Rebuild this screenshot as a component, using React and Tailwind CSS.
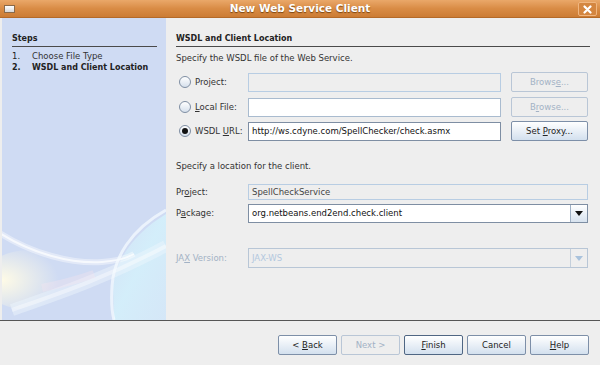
import React from 'react';

const U = ({ children }) => <span className="underline underline-offset-[1px]">{children}</span>;

const Radio = ({ checked }) => (
  <span className="relative inline-flex h-[12px] w-[12px] shrink-0 items-center justify-center rounded-full border border-[#7f8ea3] bg-gradient-to-b from-[#ffffff] to-[#d6e0ec]">
    {checked && <span className="h-[6px] w-[6px] rounded-full bg-[#111]" />}
  </span>
);

const Btn = ({ children, disabled, primary, className = '' }) => (
  <div
    className={`flex h-[20px] items-center justify-center rounded-[2px] border ${
      disabled
        ? 'border-[#b9c6d6] bg-[#eeeeee] text-[#a3b2c5]'
        : primary
        ? 'border-[#4f6683] bg-gradient-to-b from-[#ffffff] to-[#d3e0ee] text-[#222]'
        : 'border-[#7d8fa8] bg-gradient-to-b from-[#ffffff] to-[#d3e0ee] text-[#222]'
    } ${className}`}
  >
    <span className="whitespace-pre">{children}</span>
  </div>
);

const Arrow = ({ disabled }) => (
  <div className="flex h-full w-[17px] items-center justify-center border-l border-[#9fb0c4] bg-gradient-to-b from-[#ffffff] to-[#d7e2ee]">
    <svg width="8" height="5" viewBox="0 0 8 5">
      <path d="M0 0 H8 L4 5 Z" fill={disabled ? '#a9c2dc' : '#111'} />
    </svg>
  </div>
);

// soft light streaks in the bottom of the steps panel
const Swirl = () => (
  <svg className="absolute left-0 top-0 block" width="164" height="302" viewBox="0 0 164 302">
    <defs>
      <radialGradient id="glow" cx="0.2" cy="0.5" r="0.6">
        <stop offset="0" stopColor="#fffbe6" stopOpacity="1" />
        <stop offset="1" stopColor="#fffbe6" stopOpacity="0" />
      </radialGradient>
      <linearGradient id="cyan" x1="0" y1="0" x2="1" y2="1">
        <stop offset="0" stopColor="#d9f2fc" stopOpacity="0.2" />
        <stop offset="0.5" stopColor="#d4f0fb" stopOpacity="0.9" />
        <stop offset="1" stopColor="#d8eefa" stopOpacity="0.6" />
      </linearGradient>
    </defs>
    <ellipse cx="28" cy="262" rx="48" ry="30" fill="url(#glow)" />
    <path d="M164 196 C134 214 114 240 111 268 L112 302 L164 302 Z" fill="url(#cyan)" />
    <path d="M10 292 C50 278 100 262 164 228" stroke="#eef7fd" strokeOpacity="0.45" strokeWidth="12" fill="none" />
    <path d="M10 292 C50 278 100 262 164 228" stroke="#ffffff" strokeOpacity="0.4" strokeWidth="4" fill="none" />
    <path d="M-4 214 C30 236 70 246 100 244 C115 243 125 240 132 236" stroke="#ffffff" strokeOpacity="0.4" strokeWidth="6" fill="none" />
    <path d="M-4 214 C30 236 70 246 100 244 C115 243 125 240 132 236" stroke="#ffffff" strokeOpacity="0.7" strokeWidth="2" fill="none" />
    <path d="M164 192 C128 212 112 240 110 268 C109 285 110 295 112 302" stroke="#f6fcff" strokeOpacity="0.7" strokeWidth="3" fill="none" />
    <path d="M40 270 C60 266 75 262 92 256" stroke="#fbe6ee" strokeOpacity="0.3" strokeWidth="8" fill="none" />
  </svg>
);

export default function App() {
  return (
    <div className="flex h-[365px] w-[600px] flex-col bg-[#eeeeee] font-['DejaVu_Sans',sans-serif] text-[8.5px] leading-[11px] text-[#222]">
      {/* title bar */}
      <div className="relative flex h-[18px] shrink-0 items-center justify-center border-b border-[#b46a28] bg-gradient-to-b from-[#eaa869] via-[#d98c45] to-[#cc7c34]">
        <div className="absolute left-[4px] top-[5px] h-[8px] w-[11px] border border-[#8a6a4a] bg-gradient-to-b from-[#ffffff] to-[#d8d8d8]" />
        <span className="text-[10.5px] font-bold text-white [text-shadow:0_1px_1px_#7a4410]">New Web Service Client</span>
        <div className="absolute right-[3px] top-[2px] flex h-[14px] w-[19px] items-center justify-center rounded-[2px] border border-[#f0b680] bg-[#d48640]">
          <svg width="9" height="9" viewBox="0 0 9 9">
            <path d="M1.5 1.5 L7.5 7.5 M7.5 1.5 L1.5 7.5" stroke="#fff" strokeWidth="2.2" strokeLinecap="round" />
          </svg>
        </div>
      </div>

      {/* main */}
      <div className="flex h-[302px] shrink-0">
        <div className="relative ml-[2px] w-[164px] overflow-hidden bg-[#cfdbf3]">
          <Swirl />
          <div className="relative pl-[10px] pr-[9px]">
            <div className="border-b border-[#4a4a4a] pb-[2px] pt-[15px] text-[8px] font-bold">Steps</div>
            <div className="mt-[3px] leading-[12px]">
              <div className="flex"><span className="w-[20px]">1.</span><span className="text-[#333]">Choose File Type</span></div>
              <div className="flex text-[8px] font-bold"><span className="w-[20px]">2.</span><span>WSDL and Client Location</span></div>
            </div>
          </div>
        </div>

        <div className="flex-1 pl-[10px] pr-[10px]">
          <div className="border-b border-[#4a4a4a] pb-[2px] pt-[15px] text-[8px] font-bold">WSDL and Client Location</div>
          <div className="mt-[6px] text-[#333]">Specify the WSDL file of the Web Service.</div>

          <div className="mt-[8px] flex h-[20px] items-center">
            <div className="flex w-[72px] items-center gap-[4px] pl-[3px] text-[#333]"><Radio /><span>Project:</span></div>
            <div className="h-[19px] w-[253px] border border-[#b8cde3] bg-[#eeeeee]" />
            <Btn disabled className="ml-[10px] w-[77px]">Brows<U>e</U>...</Btn>
          </div>

          <div className="mt-[5px] flex h-[20px] items-center">
            <div className="flex w-[72px] items-center gap-[4px] pl-[3px] text-[#333]"><Radio /><span><U>L</U>ocal File:</span></div>
            <div className="h-[19px] w-[253px] border border-[#a9bbcf] bg-white" />
            <Btn disabled className="ml-[10px] w-[77px]">B<U>r</U>owse...</Btn>
          </div>

          <div className="mt-[4px] flex h-[20px] items-center">
            <div className="flex w-[72px] items-center gap-[4px] pl-[3px] text-[#333]"><Radio checked /><span>WSDL <U>U</U>RL:</span></div>
            <div className="flex h-[19px] w-[253px] items-center border border-[#7e8ea3] bg-white pl-[3px] text-[#111]">http://ws.cdyne.com/SpellChecker/check.asmx</div>
            <Btn className="ml-[10px] w-[77px]">{'Set '}<U>P</U>roxy...</Btn>
          </div>

          <div className="mt-[20px] text-[#333]">Specify a location for the client.</div>

          <div className="mt-[12px] flex h-[16px] items-center">
            <div className="w-[72px] text-[#333]">Pr<U>o</U>ject:</div>
            <div className="flex h-[16px] w-[340px] items-center border border-[#b8cde3] bg-[#eeeeee] pl-[3px] text-[#444]">SpellCheckService</div>
          </div>

          <div className="mt-[4px] flex h-[19px] items-center">
            <div className="w-[72px] text-[#333]">P<U>a</U>ckage:</div>
            <div className="flex h-[19px] w-[340px] items-center border border-[#7e8ea3] bg-white">
              <span className="flex-1 pl-[3px] text-[#111]">org.netbeans.end2end.check.client</span>
              <Arrow />
            </div>
          </div>

          <div className="mt-[25px] flex h-[20px] items-center">
            <div className="w-[72px] text-[#a3b2c5]">JA<U>X</U> Version:</div>
            <div className="flex h-[20px] w-[340px] items-center border border-[#b8c6d6] bg-[#eeeeee]">
              <span className="flex-1 pl-[3px] text-[#b3c8de]">JAX-WS</span>
              <div className="flex h-full w-[17px] items-center justify-center border-l border-[#c4cfdb]">
                <svg width="8" height="5" viewBox="0 0 8 5"><path d="M0 0 H8 L4 5 Z" fill="#a9c2dc" /></svg>
              </div>
            </div>
          </div>
        </div>
      </div>

      {/* footer */}
      <div className="flex flex-1 justify-end gap-[4px] border-t border-[#555] pr-[11px] pt-[14px]">
        <Btn className="w-[59px]">{'< '}<U>B</U>ack</Btn>
        <Btn disabled className="w-[59px]">{'Next >'}</Btn>
        <Btn primary className="w-[59px]"><U>F</U>inish</Btn>
        <Btn className="w-[59px]">Cancel</Btn>
        <Btn className="w-[59px]"><U>H</U>elp</Btn>
      </div>
    </div>
  );
}
